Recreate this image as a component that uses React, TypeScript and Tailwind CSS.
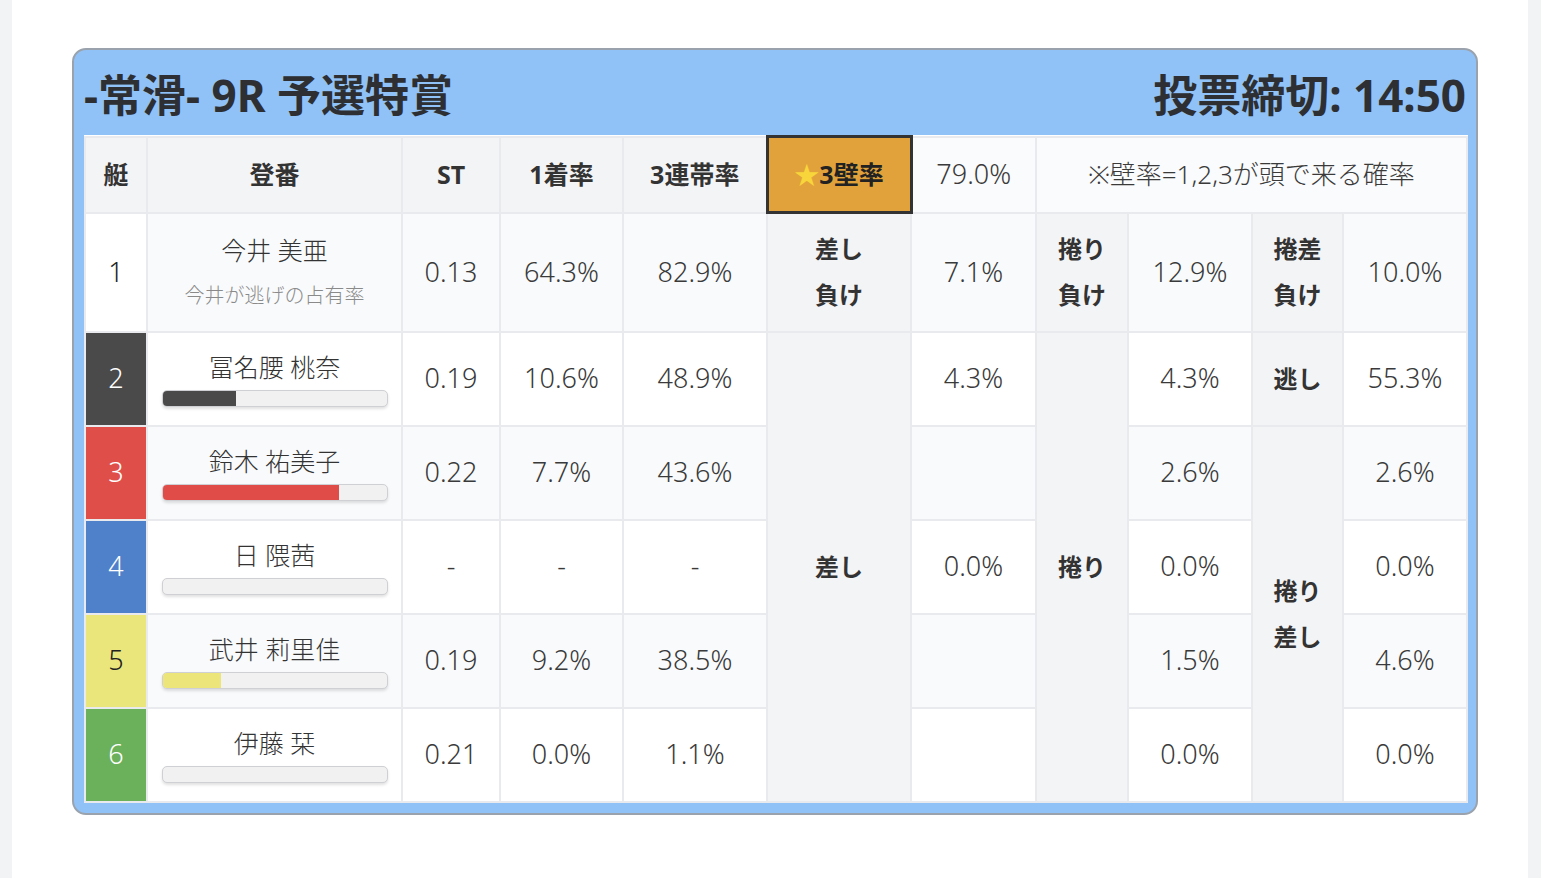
const FONT = '"Noto Sans", "Noto Sans CJK JP", sans-serif';

type Racer = {
  no: number;
  name: string;
  st: string;
  win: string;
  top3: string;
  bar: number;
  boat: string;
  fill: string;
  text: string;
};

const racers: Racer[] = [
  { no: 1, name: "今井 美亜", st: "0.13", win: "64.3%", top3: "82.9%", bar: 0, boat: "bg-white", fill: "", text: "text-[#222]" },
  { no: 2, name: "冨名腰 桃奈", st: "0.19", win: "10.6%", top3: "48.9%", bar: 33, boat: "bg-[#4a4a4a]", fill: "#4a4a4a", text: "text-white" },
  { no: 3, name: "鈴木 祐美子", st: "0.22", win: "7.7%", top3: "43.6%", bar: 79, boat: "bg-[#e04e4a]", fill: "#e04c48", text: "text-white" },
  { no: 4, name: "日 隈茜", st: "-", win: "-", top3: "-", bar: 0, boat: "bg-[#4f81cb]", fill: "", text: "text-white" },
  { no: 5, name: "武井 莉里佳", st: "0.19", win: "9.2%", top3: "38.5%", bar: 26, boat: "bg-[#ebe67b]", fill: "#ebe57a", text: "text-[#222]" },
  { no: 6, name: "伊藤 栞", st: "0.21", win: "0.0%", top3: "1.1%", bar: 0, boat: "bg-[#6bb05a]", fill: "", text: "text-white" },
];

// 差し / 捲り / 捲り差し の列（2〜6号艇）
const sashi = ["4.3%", "", "0.0%", "", ""];
const makuri = ["4.3%", "2.6%", "0.0%", "1.5%", "0.0%"];
const makuriSashi = ["2.6%", "0.0%", "4.6%", "0.0%"];

const cell = "border-2 border-[#e9eaee] text-center align-middle";
const num = "text-[27px] font-light text-[#3a3a3a]";
const label = "bg-[#f3f4f6] text-[24px] font-bold text-[#333] leading-[46px]";

function Bar({ pct, color }: { pct: number; color: string }) {
  return (
    <div className="mx-auto mt-[6px] h-[17px] w-[226px] overflow-hidden rounded-[5px] border border-[#cfd0d4] bg-[#f1f1f2] shadow-[0_2px_3px_rgba(0,0,0,0.12)]">
      {pct > 0 && <div className="h-full" style={{ width: `${pct}%`, backgroundColor: color }} />}
    </div>
  );
}

export default function App() {
  return (
    <div className="min-h-screen bg-[#f2f3f5] px-3" style={{ fontFamily: FONT }}>
      <div className="min-h-screen w-[1516px] bg-white pt-[48px] pl-[60px]">
        <div className="w-[1406px] rounded-[14px] border-2 border-[#9aa3ad] bg-[#90c2f7] px-[10px] pb-[10px]">
          <div className="flex h-[85px] items-center justify-between pt-[4px] text-[44px] font-bold leading-none text-[#2d2f33]">
            <span>-常滑- 9R 予選特賞</span>
            <span>投票締切: 14:50</span>
          </div>

          <table className="w-[1382px] table-fixed border-collapse bg-white">
            <colgroup>
              <col className="w-[62px]" />
              <col className="w-[255px]" />
              <col className="w-[98px]" />
              <col className="w-[123px]" />
              <col className="w-[144px]" />
              <col className="w-[144px]" />
              <col className="w-[125px]" />
              <col className="w-[92px]" />
              <col className="w-[124px]" />
              <col className="w-[91px]" />
              <col className="w-[124px]" />
            </colgroup>
            <thead>
              <tr className="h-[76px] bg-[#f3f4f6] text-[25px] font-bold text-[#333]">
                <th className={cell}>艇</th>
                <th className={cell}>登番</th>
                <th className={cell}>ST</th>
                <th className={cell}>1着率</th>
                <th className={cell}>3連帯率</th>
                <th className="relative z-10 border-[3px] border-[#333] bg-[#e1a23b] text-center align-middle text-[25px] font-bold text-[#222] shadow-[2px_3px_4px_rgba(0,0,0,0.35)]">
                  <span className="text-[#f8d53a]">★</span>3壁率
                </th>
                <td className={`${cell} ${num} bg-[#fafbfc]`}>79.0%</td>
                <td colSpan={4} className={`${cell} bg-[#fafbfc] text-[26px] font-light text-[#3a3a3a]`}>
                  ※壁率=1,2,3が頭で来る確率
                </td>
              </tr>
            </thead>
            <tbody>
              {racers.map((r, i) => {
                const stripe = i % 2 === 0 ? "bg-[#f9fafc]" : "bg-white";
                return (
                  <tr key={r.no} className={i === 0 ? "h-[119px]" : "h-[94px]"}>
                    <td className={`${cell} ${r.boat} ${r.text} text-[27px] font-light`}>{r.no}</td>
                    <td className={`${cell} ${stripe}`}>
                      <div className="text-[25px] font-light leading-[34px] text-[#333]">{r.name}</div>
                      {i === 0 ? (
                        <div className="mt-[14px] text-[20px] font-light text-[#8a8a8a]">今井が逃げの占有率</div>
                      ) : (
                        <Bar pct={r.bar} color={r.fill} />
                      )}
                    </td>
                    <td className={`${cell} ${stripe} ${num}`}>{r.st}</td>
                    <td className={`${cell} ${stripe} ${num}`}>{r.win}</td>
                    <td className={`${cell} ${stripe} ${num}`}>{r.top3}</td>

                    {i === 0 && (
                      <>
                        <td className={`${cell} ${label}`}>差し<br />負け</td>
                        <td className={`${cell} ${stripe} ${num}`}>7.1%</td>
                        <td className={`${cell} ${label}`}>捲り<br />負け</td>
                        <td className={`${cell} ${stripe} ${num}`}>12.9%</td>
                        <td className={`${cell} ${label}`}>捲差<br />負け</td>
                        <td className={`${cell} ${stripe} ${num}`}>10.0%</td>
                      </>
                    )}
                    {i === 1 && (
                      <td rowSpan={5} className={`${cell} ${label}`}>差し</td>
                    )}
                    {i >= 1 && <td className={`${cell} ${stripe} ${num}`}>{sashi[i - 1]}</td>}
                    {i === 1 && (
                      <td rowSpan={5} className={`${cell} ${label}`}>捲り</td>
                    )}
                    {i >= 1 && <td className={`${cell} ${stripe} ${num}`}>{makuri[i - 1]}</td>}
                    {i === 1 && (
                      <>
                        <td className={`${cell} ${label}`}>逃し</td>
                        <td className={`${cell} ${stripe} ${num}`}>55.3%</td>
                      </>
                    )}
                    {i === 2 && (
                      <td rowSpan={4} className={`${cell} ${label}`}>捲り<br />差し</td>
                    )}
                    {i >= 2 && <td className={`${cell} ${stripe} ${num}`}>{makuriSashi[i - 2]}</td>}
                  </tr>
                );
              })}
            </tbody>
          </table>
        </div>
      </div>
    </div>
  );
}
